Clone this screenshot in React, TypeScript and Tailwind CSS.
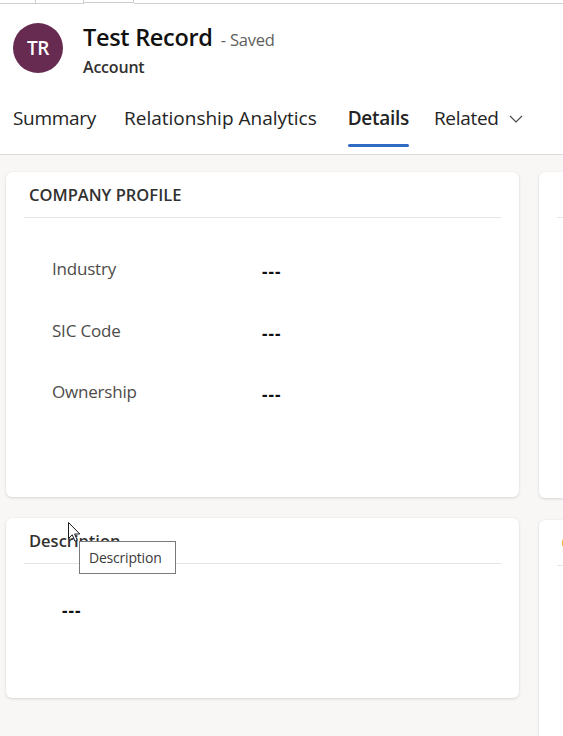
import React from "react";

type Field = { label: string; value: string };

const profileFields: Field[] = [
  { label: "Industry", value: "---" },
  { label: "SIC Code", value: "---" },
  { label: "Ownership", value: "---" },
];

const cardShadow =
  "bg-white rounded-md shadow-[0_1px_3px_rgba(0,0,0,0.13),0_0_1px_rgba(0,0,0,0.08)] px-[18px]";

function Card({
  title,
  height,
  children,
  upper,
}: {
  title: React.ReactNode;
  height: string;
  children?: React.ReactNode;
  upper?: boolean;
}) {
  return (
    <div className={`${height} ${cardShadow}`}>
      <div
        className={`h-[46px] pt-[2px] border-b border-[#e6e4e2] flex items-center pl-[5px] text-[16.5px] font-semibold text-[#323130] ${
          upper ? "uppercase" : ""
        }`}
      >
        {title}
      </div>
      {children}
    </div>
  );
}

function EmptyValue({ className = "" }: { className?: string }) {
  return (
    <div className={`text-[17px] font-bold text-[#111] tracking-[1px] ${className}`}>---</div>
  );
}

function Cursor() {
  return (
    <svg
      className="absolute left-[68px] top-[522px]"
      width="13"
      height="21"
      viewBox="0 0 13 21"
    >
      <path
        d="M0.5 0.5 L0.5 16.5 L4.3 12.8 L7 19.3 L9.3 18.3 L6.6 12 L11.8 12 Z"
        fill="#ffffff"
        stroke="#1a1a1a"
        strokeWidth="1"
        strokeLinejoin="round"
      />
    </svg>
  );
}

export default function App() {
  return (
    <div className="relative h-[736px] w-[563px] overflow-hidden bg-[#f8f7f6] font-['Open_Sans',sans-serif]">
      {/* header */}
      <div className="bg-white border-b border-[#dcdad8]">
        {/* browser-like tab strip */}
        <div className="flex h-[4px]">
          <div className="w-[36px] border-b border-r border-[#cfcfcf]" />
          <div className="w-[48px] border-b border-r border-[#cfcfcf]" />
          <div className="w-[50px] h-[3px] border-b border-r border-[#cfcfcf]" />
          <div className="flex-1 border-b border-[#cfcfcf]" />
        </div>

        <div className="flex items-start pl-[13px] pt-[19px]">
          <div className="w-[50px] h-[50px] rounded-full bg-[#672a50] flex items-center justify-center text-white text-[19px] font-semibold tracking-[-0.5px]">
            TR
          </div>
          <div className="ml-[20px] flex flex-col">
            <div className="flex items-baseline h-[30px] -mt-[1px]">
              <span className="text-[23.5px] font-semibold text-[#111] leading-[30px] tracking-[-0.3px]">
                Test Record
              </span>
              <span className="ml-[8px] text-[16.5px] text-[#605e5c] tracking-[-0.2px]">
                - Saved
              </span>
            </div>
            <div className="text-[16px] font-semibold text-[#323130] leading-[20px] mt-[5px] tracking-[-0.2px]">
              Account
            </div>
          </div>
        </div>

        {/* tabs */}
        <div className="flex items-stretch h-[65px] mt-[12px] pb-[7px] pl-[13px] text-[19px] text-[#242424] tracking-[-0.3px]">
          <div className="flex items-center">Summary</div>
          <div className="flex items-center ml-[28px] tracking-[0px]">Relationship Analytics</div>
          <div className="relative flex items-center ml-[31px] font-semibold">
            Details
            <div className="absolute left-0 right-0 bottom-0 h-[3px] rounded-sm bg-[#2f6bc2]" />
          </div>
          <div className="flex items-center ml-[25px]">
            Related
            <svg className="ml-[10px] mt-[1px]" width="14" height="8" viewBox="0 0 14 8">
              <path d="M1 1 L7 7 L13 1" fill="none" stroke="#444" strokeWidth="1.1" />
            </svg>
          </div>
        </div>
      </div>

      {/* body */}
      <div className="flex gap-[20px] pt-[17px] pl-[6px]">
        <div className="w-[513px] shrink-0 flex flex-col gap-[21px]">
          <Card title="Company Profile" height="h-[325px]" upper>
            <div className="pt-[20px] pl-[28px]">
              {profileFields.map((f) => (
                <div key={f.label} className="flex items-center h-[61.5px]">
                  <div className="w-[210px] text-[17px] text-[#4d4b49] tracking-[-0.2px]">
                    {f.label}
                  </div>
                  <EmptyValue className="mt-[6px]" />
                </div>
              ))}
            </div>
          </Card>
          <Card title="Description" height="h-[180px]">
            <EmptyValue className="pl-[38px] pt-[34px]" />
          </Card>
        </div>

        <div className="w-[513px] shrink-0 flex flex-col gap-[22px]">
          <Card title="" height="h-[326px]" />
          <div className={`h-[400px] ${cardShadow}`}>
            <div className="h-[46px] border-b border-[#e6e4e2] flex items-center pl-[5px]">
              <div className="w-[12px] h-[10px] rounded-sm bg-[#f2b233]" />
            </div>
          </div>
        </div>
      </div>

      {/* tooltip */}
      <div className="absolute left-[79px] top-[541px] w-[97px] h-[33px] border border-[#7a7a7a] bg-white flex items-center pl-[9px] text-[14px] text-[#3b3b3b] tracking-[-0.2px]">
        Description
      </div>
      <Cursor />
    </div>
  );
}
